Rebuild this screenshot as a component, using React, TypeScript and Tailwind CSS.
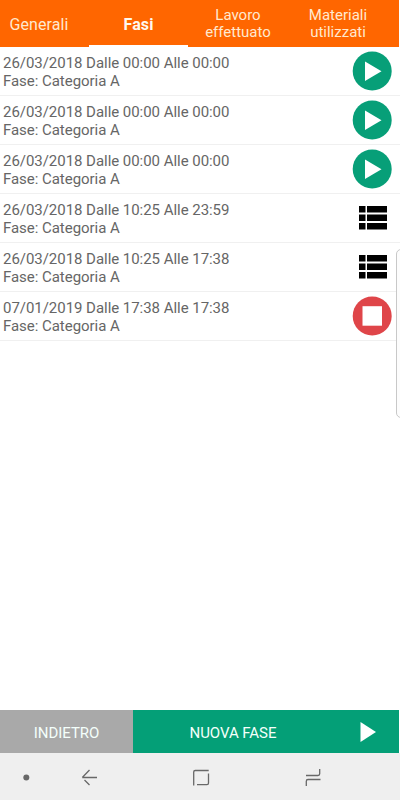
const fasi = [
  { id: 1, data: "26/03/2018", dalle: "00:00", alle: "00:00", stato: "play" },
  { id: 2, data: "26/03/2018", dalle: "00:00", alle: "00:00", stato: "play" },
  { id: 3, data: "26/03/2018", dalle: "00:00", alle: "00:00", stato: "play" },
  { id: 4, data: "26/03/2018", dalle: "10:25", alle: "23:59", stato: "lista" },
  { id: 5, data: "26/03/2018", dalle: "10:25", alle: "17:38", stato: "lista" },
  { id: 6, data: "07/01/2019", dalle: "17:38", alle: "17:38", stato: "stop" },
];

function App() {
  return (
    <div className="relative flex h-[800px] w-[400px] flex-col overflow-hidden bg-white font-[Roboto,sans-serif]">
      <Tabs />
      <main className="flex-1">
        {fasi.map((fase) => (
          <div
            key={fase.id}
            className="flex h-[49px] items-center justify-between border-b border-[#f0f0f0] pl-[3px] pr-2"
          >
            <div className="pt-[2px] text-[15px] leading-[18px] tracking-[-0.04px] text-[#666]">
              <p>
                {fase.data} Dalle {fase.dalle} Alle {fase.alle}
              </p>
              <p>Fase: Categoria A</p>
            </div>
            <StatoIcon stato={fase.stato} />
          </div>
        ))}
      </main>
      {/* edge panel handle */}
      <div className="absolute -right-2 top-[249px] h-[169px] w-[12px] rounded-[5px] border border-[#c8c8c8] bg-[#fcfcfc]" />
      <Azioni />
      <NavBar />
    </div>
  );
}

function Tabs() {
  return (
    <nav className="mr-px flex h-[47px] bg-[#ff6600] text-center text-[#ffe9cf]">
      <div className="w-[89px] pr-[11px] pt-[15px] text-[16px] leading-[20px] tracking-[0.1px]">
        Generali
      </div>
      <div className="w-[99px] border-b-2 border-white pt-[15px] text-[16px] font-bold leading-[20px] tracking-[0.1px] text-[#fff8ee]">
        Fasi
      </div>
      <div className="w-[100px] pt-[7px] text-[15px] leading-[17px]">
        Lavoro
        <br />
        effettuato
      </div>
      <div className="w-[100px] pt-[7px] text-[15px] leading-[17px]">
        Materiali
        <br />
        utilizzati
      </div>
    </nav>
  );
}

function StatoIcon({ stato }: { stato: string }) {
  if (stato === "play") {
    return (
      <svg width="40" height="40" viewBox="0 0 40 40">
        <circle cx="20.2" cy="20" r="19.5" fill="#079f78" />
        <path d="M13 10.5V30L29.5 20.2Z" fill="#fff" />
      </svg>
    );
  }
  if (stato === "stop") {
    return (
      <svg width="40" height="40" viewBox="0 0 40 40">
        <circle cx="20.2" cy="20" r="19.5" fill="#df4549" />
        <rect x="10.5" y="10.2" width="19.5" height="19.5" fill="#fff" />
      </svg>
    );
  }
  return (
    <svg width="40" height="40" viewBox="0 0 40 40">
      <path d="M7 8h6.5v6.5H7zM15 8h20v6.5H15zM7 16.5h6.5V23H7zM15 16.5h20V23H15zM7 25h6.5v6.5H7zM15 25h20v6.5H15z" />
    </svg>
  );
}

function Azioni() {
  return (
    <div className="mr-px flex h-[43px] text-[15px] tracking-[-0.04px] text-[#f4fffb]">
      <button className="w-[133px] bg-[#a9a9a9] pt-[3px]">INDIETRO</button>
      <button className="flex flex-1 items-center bg-[#049f77]">
        <span className="w-[200px] pt-[3px] text-center">NUOVA FASE</span>
        <svg width="18" height="22" viewBox="0 0 18 22" className="ml-[26px]">
          <path d="M1.5 1V21L17 11Z" fill="#fff" />
        </svg>
      </button>
    </div>
  );
}

function NavBar() {
  return (
    <svg
      width="400"
      height="47"
      viewBox="0 753 400 47"
      fill="none"
      stroke="#686868"
      strokeWidth="1.3"
      className="bg-[#efefef]"
    >
      <circle cx="26.3" cy="777.5" r="3" fill="#686868" stroke="none" />
      <path d="M97 777.5H82.3M89.5 770L82.3 777.5M84.5 780L89.5 785" />
      <path d="M193.7 785.5V772Q193.7 770.5 195.2 770.5H208.7M208.5 773.5V783Q208.5 784.7 207 784.7H197" />
      <path d="M306 775.5H318Q319.7 775.5 319.7 773.8V769M320.5 779.5H308Q306.3 779.5 306.3 781.2V786" />
    </svg>
  );
}

export default App;
